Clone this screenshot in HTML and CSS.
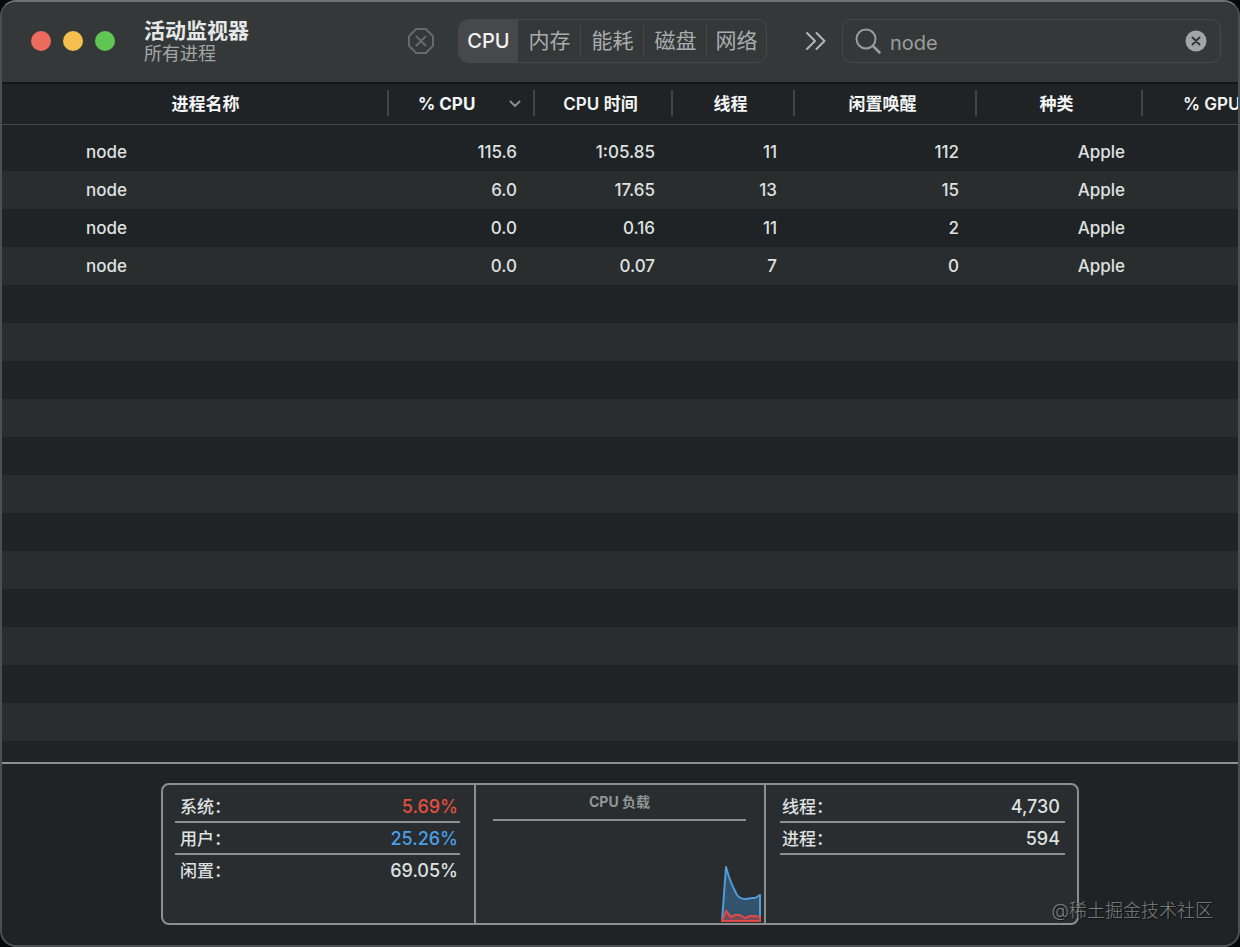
FILE: index.html
```html
<!DOCTYPE html>
<html lang="zh-CN">
<head>
<meta charset="utf-8">
<title>活动监视器</title>
<link rel="stylesheet" href="styles.css">
</head>
<body>
<div class="window">
 <header class="titlebar">
  <div class="lights">
   <button type="button" class="light red" aria-label="关闭"></button>
   <button type="button" class="light yellow" aria-label="最小化"></button>
   <button type="button" class="light green" aria-label="缩放"></button>
  </div>
  <div class="title">
   <h1>活动监视器</h1>
   <p>所有进程</p>
  </div>
  <button type="button" class="icon-btn stop" aria-label="停止进程">
   <svg width="28" height="28" viewBox="0 0 28 28" fill="none" stroke="#66696a" stroke-width="2" stroke-linecap="round" stroke-linejoin="round">
    <path d="M9.2 2h9.6L26 9.200v9.600L18.800 26H9.200L2 18.800V9.200z"/>
    <path d="M9.500 9.500l9 9M18.500 9.500l-9 9"/>
   </svg>
  </button>
  <nav class="tabs">
   <button type="button" class="tab active">CPU</button>
   <button type="button" class="tab">内存</button>
   <button type="button" class="tab">能耗</button>
   <button type="button" class="tab">磁盘</button>
   <button type="button" class="tab">网络</button>
  </nav>
  <button type="button" class="icon-btn more" aria-label="更多">
   <svg width="22" height="20" viewBox="0 0 22 20" fill="none" stroke="#b3b5b6" stroke-width="2" stroke-linecap="round" stroke-linejoin="round">
    <path d="M2 2l8 8-8 8M11.500 2l8 8-8 8"/>
   </svg>
  </button>
  <div class="search">
   <svg width="28" height="28" viewBox="0 0 28 28" fill="none" stroke="#9a9d9e" stroke-width="2" stroke-linecap="round">
    <circle cx="11" cy="12" r="9.500"/>
    <path d="M18 19l6.500 6.500" stroke-width="2.500"/>
   </svg>
   <input type="text" value="node" aria-label="搜索">
   <button type="button" class="icon-btn" aria-label="清除">
    <svg width="22" height="22" viewBox="0 0 22 22">
     <circle cx="11" cy="11" r="10.500" fill="#a2a5a6"/>
     <path d="M7.500 7.500l7 7M14.500 7.500l-7 7" stroke="#343838" stroke-width="2" stroke-linecap="round"/>
    </svg>
   </button>
  </div>
 </header>

 <main class="list">
  <table>
   <colgroup>
    <col class="c-name"><col class="c-cpu"><col class="c-time"><col class="c-threads"><col class="c-wake"><col class="c-kind"><col class="c-gpu">
   </colgroup>
   <thead>
    <tr>
     <th class="name">进程名称</th>
     <th class="sorted" aria-sort="descending">
      <div>
       <span>% CPU</span>
       <svg width="12" height="8" viewBox="0 0 12 8" fill="none" stroke="#8a8d8e" stroke-width="2" stroke-linecap="round" stroke-linejoin="round"><path d="M1.500 1.500L6 6l4.500-4.500"/></svg>
      </div>
     </th>
     <th>CPU 时间</th>
     <th>线程</th>
     <th>闲置唤醒</th>
     <th>种类</th>
     <th class="gpu">% GPU</th>
    </tr>
   </thead>
   <tbody>
    <tr><td>node</td><td>115.6</td><td>1:05.85</td><td>11</td><td>112</td><td>Apple</td><td></td></tr>
    <tr><td>node</td><td>6.0</td><td>17.65</td><td>13</td><td>15</td><td>Apple</td><td></td></tr>
    <tr><td>node</td><td>0.0</td><td>0.16</td><td>11</td><td>2</td><td>Apple</td><td></td></tr>
    <tr><td>node</td><td>0.0</td><td>0.07</td><td>7</td><td>0</td><td>Apple</td><td></td></tr>
   </tbody>
  </table>
  <div class="empty"></div>
 </main>

 <footer class="footer">
  <div class="stats">
   <dl class="usage">
    <div><dt>系统：</dt><dd class="sys">5.69%</dd></div>
    <div><dt>用户：</dt><dd class="user">25.26%</dd></div>
    <div><dt>闲置：</dt><dd>69.05%</dd></div>
   </dl>
   <section class="load">
    <h2>CPU 负载</h2>
    <svg width="42" height="60" viewBox="0 0 42 60" stroke-width="2" stroke-linejoin="round">
     <path d="M2 58L6 4l3 10 4 10 4 8q3 4 9 4l6-1h3l5-3v26z" fill="#32536c" stroke="#4f9bdb"/>
     <path d="M2 58l4-10 5 6 4-2h5l5 3 5-2h5l5 1v4z" fill="#7c4a54" stroke="#dc4c4a"/>
    </svg>
   </section>
   <dl class="counts">
    <div><dt>线程：</dt><dd>4,730</dd></div>
    <div><dt>进程：</dt><dd>594</dd></div>
   </dl>
  </div>
  <span class="watermark">@稀土掘金技术社区</span>
 </footer>
</div>
</body>
</html>
```
FILE: styles.css
```css
* {
 box-sizing: border-box;
}
body {
 margin: 0;
 background: #050809;
 color: #dfe1e1;
 font-family: Inter, "Noto Sans CJK SC", sans-serif;
 font-size: 17px;
 font-weight: 500;
}
h1, h2, p, dl, dd {
 margin: 0;
}
button {
 padding: 0;
 border: 0;
 background: none;
 color: inherit;
 font: inherit;
}
svg {
 display: block;
 flex: none;
}
.window {
 display: flex;
 flex-direction: column;
 min-height: 100vh;
 border: 2px solid #4b4f50;
 border-top-color: #6d7172;
 border-radius: 16px;
 background: #1f2325;
 overflow: hidden;
}

/* title bar */
.titlebar {
 display: flex;
 align-items: center;
 height: 82px;
 padding: 0 17px 2px 29px;
 background: #343838;
 border-bottom: 2px solid #131617;
}
.lights {
 display: flex;
 gap: 12px;
}
.light {
 width: 20px;
 height: 20px;
 border-radius: 50%;
}
.red { background: #ed6a5f; }
.yellow { background: #f4bf4f; }
.green { background: #61c554; }
.title {
 margin-left: 29px;
 margin-right: auto;
 padding-top: 2px;
 white-space: nowrap;
}
.title h1 {
 font-size: 21px;
 line-height: 24px;
 font-weight: 700;
 color: #e6e8e8;
}
.title p {
 font-size: 18px;
 line-height: 22px;
 font-weight: 400;
 color: #a3a6a7;
}
.stop {
 margin-right: 23px;
}
.tabs {
 display: flex;
 height: 44px;
 border: 1px solid #454949;
 border-radius: 10px;
 overflow: hidden;
}
.tab {
 width: 63px;
 padding-bottom: 4px;
 font-size: 21px;
 font-weight: 400;
 color: #a9acad;
 background: linear-gradient(#434747, #434747) right center / 1px 32px no-repeat;
}
.tab:last-child {
 width: 59px;
 background: none;
}
.tab.active {
 width: 59px;
 padding-bottom: 0;
 font-weight: 500;
 font-size: 20px;
 background: #47484b;
 color: #f1f2f2;
}
.more {
 margin: 0 15px 0 38px;
}
.search {
 display: flex;
 align-items: center;
 width: 379px;
 height: 44px;
 padding: 0 13px 0 12px;
 border: 1px solid #454949;
 border-radius: 10px;
}
.search input {
 flex: 1;
 min-width: 0;
 height: 40px;
 padding: 4px 0 0 7px;
 border: 0;
 outline: 0;
 background: none;
 color: #9b9e9f;
 font: inherit;
 font-size: 20px;
 font-weight: 400;
}

/* process list */
.list {
 flex: 1;
 display: flex;
 flex-direction: column;
 overflow: hidden;
}
table {
 width: calc(100% + 60px);
 table-layout: fixed;
 border-collapse: separate;
 border-spacing: 0;
}
.c-name { width: 387px; }
.c-cpu { width: 146px; }
.c-time { width: 138px; }
.c-threads { width: 122px; }
.c-wake { width: 182px; }
.c-kind { width: 166px; }
th {
 height: 41px;
 padding: 0 7px 4px 0;
 border-bottom: 1px solid #424647;
 background: linear-gradient(#414546, #414546) right 6px / 2px 26px no-repeat;
 color: #f4f5f5;
 font-weight: 600;
 white-space: nowrap;
}
th.name {
 padding-left: 27px;
}
th.sorted {
 padding: 0 14px 1px 29px;
 font-weight: 700;
}
th.sorted div {
 display: flex;
 align-items: center;
 justify-content: space-between;
}
th.gpu {
 padding: 0 0 1px 40px;
 text-align: left;
}
tbody::before {
 content: "";
 display: table-row;
 height: 8px;
}
td {
 height: 38px;
 padding: 0 18px 0 0;
 text-align: right;
}
td:first-child {
 padding-left: 84px;
 text-align: left;
}
tbody tr:nth-child(even) {
 background: #292d2e;
}
.empty {
 flex: 1;
 background: repeating-linear-gradient(#1f2325 0 38px, #292d2e 38px 76px);
}

/* bottom panel */
.footer {
 position: relative;
 padding: 19px 20px 20px;
 border-top: 2px solid #8b8f90;
}
.stats {
 display: grid;
 grid-template-columns: 311px 1fr 311px;
 max-width: 918px;
 height: 142px;
 margin: 0 auto;
 border: 2px solid #8b8f90;
 border-radius: 8px;
 background: #292d2f;
}
.stats dl {
 padding: 6px 14px 0 12px;
}
.stats dl div {
 display: flex;
 justify-content: space-between;
 height: 32px;
 padding: 0 2px 0 5px;
 line-height: 32px;
 border-bottom: 2px solid #8b8f90;
}
.stats .usage div:last-child {
 border-bottom: 0;
}
.stats .counts {
 padding: 6px 12px 0 14px;
}
.stats .counts div {
 padding: 0 5px 0 2px;
}
dd {
 font-size: 18px;
}
.sys { color: #e2503f; }
.user { color: #4b9fe6; }
.load {
 display: flex;
 flex-direction: column;
 padding: 0 2px 0 17px;
 border: solid #8b8f90;
 border-width: 0 2px;
}
.load h2 {
 height: 36px;
 margin-right: 16px;
 border-bottom: 2px solid #8b8f90;
 font-size: 14px;
 line-height: 34px;
 font-weight: 700;
 text-align: center;
 color: #929697;
}
.load svg {
 margin: auto 0 0 auto;
}
.watermark {
 position: absolute;
 right: 25px;
 bottom: 21px;
 font-size: 18px;
 line-height: 26px;
 font-weight: 300;
 color: #7d8182;
 text-shadow: 1px 1px 1px #111;
}
```
